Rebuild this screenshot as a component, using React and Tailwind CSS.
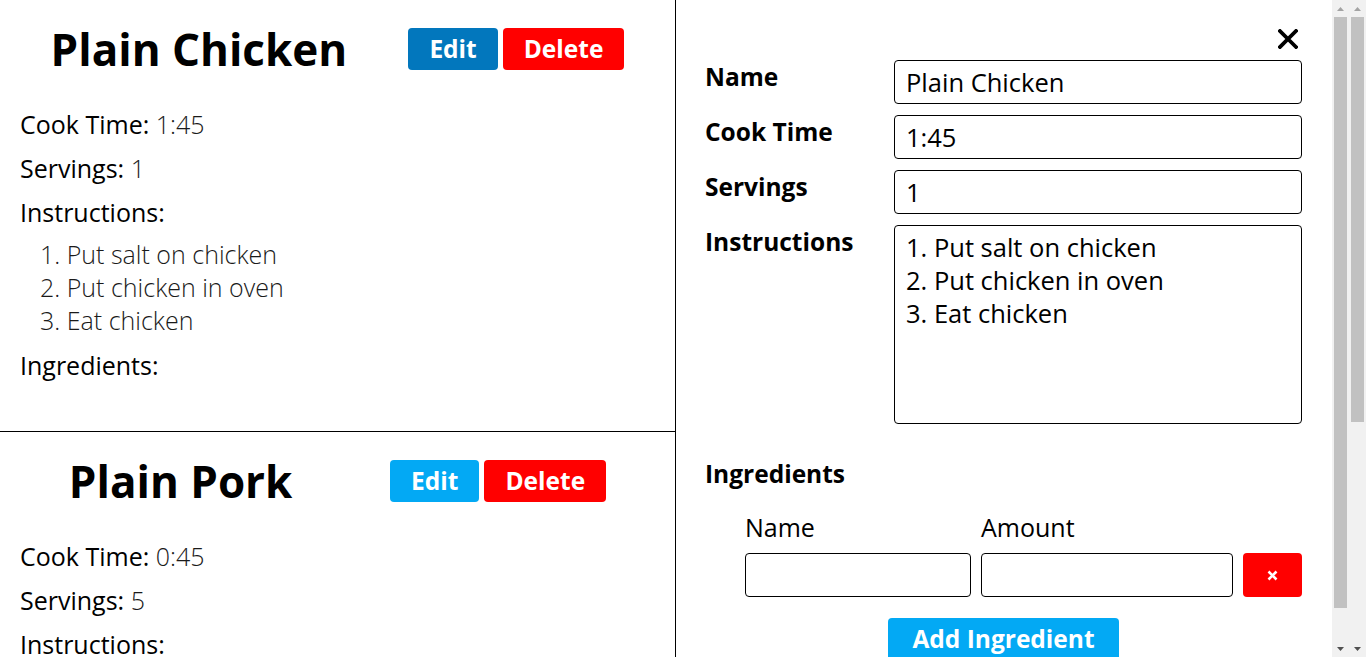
import React from 'react';

const recipes = [
  {
    id: 1,
    name: 'Plain Chicken',
    cookTime: '1:45',
    servings: 1,
    instructions: ['Put salt on chicken', 'Put chicken in oven', 'Eat chicken'],
    selected: true,
  },
  {
    id: 2,
    name: 'Plain Pork',
    cookTime: '0:45',
    servings: 5,
    instructions: ['Put paprika on pork', 'Put pork in oven', 'Eat pork'],
    selected: false,
  },
];

const font = { fontFamily: '"Open Sans", "Noto Sans", sans-serif' };

const Recipe = ({ recipe }) => (
  <div className="border-b border-black px-5 pt-5 pb-[50px]">
    <div className="flex items-center justify-around">
      <h1 className="text-[44px] font-bold leading-[58px] text-black">{recipe.name}</h1>
      <div className="flex gap-[5px]">
        <button
          className={`h-[42px] rounded px-[21px] text-[24.5px] font-bold text-white ${
            recipe.selected ? 'bg-[#0277bd]' : 'bg-[#03a9f4]'
          }`}
        >
          Edit
        </button>
        <button className="h-[42px] rounded bg-[#ff0000] px-[21px] text-[24.5px] font-bold text-white">
          Delete
        </button>
      </div>
    </div>
    <div className="mt-[30px] flex flex-col gap-3 text-[25px] leading-[32px]">
      <div>
        <span>Cook Time: </span>
        <span className="font-light text-[#1a1a1a]">{recipe.cookTime}</span>
      </div>
      <div>
        <span>Servings: </span>
        <span className="font-light text-[#1a1a1a]">{recipe.servings}</span>
      </div>
      <div>
        <span>Instructions:</span>
        <ol className="mt-[10px] list-inside list-decimal pl-5 font-light leading-[33px] text-[#1a1a1a]">
          {recipe.instructions.map((step) => (
            <li key={step}>{step}</li>
          ))}
        </ol>
      </div>
      <div>Ingredients:</div>
    </div>
  </div>
);

const Field = ({ label, children }) => (
  <div className="flex items-start">
    <label className="w-[189px] shrink-0 pt-px text-[24.5px] font-bold leading-[32px]">{label}</label>
    {children}
  </div>
);

const inputCls =
  'h-[44px] w-full rounded border border-black px-[11px] text-[25.5px] font-normal text-black outline-none';

// browser scrollbar as it shows in the screenshot
const Scrollbar = ({ thumbTop, thumbHeight }) => (
  <div className="flex h-full w-[17px] shrink-0 flex-col bg-[#f1f1f1]">
    <div className="flex h-[17px] shrink-0 items-center justify-center">
      <svg width="7" height="4" viewBox="0 0 7 4">
        <path d="M0 4 L3.5 0 L7 4 Z" fill="#a3a3a3" />
      </svg>
    </div>
    <div className="flex-1 px-[2px]">
      <div className="bg-[#c1c1c1]" style={{ marginTop: thumbTop, height: thumbHeight }} />
    </div>
    <div className="flex h-[17px] shrink-0 items-center justify-center">
      <svg width="7" height="4" viewBox="0 0 7 4">
        <path d="M0 0 L3.5 4 L7 0 Z" fill="#505050" />
      </svg>
    </div>
  </div>
);

export default function App() {
  return (
    <div className="flex h-screen overflow-hidden bg-white text-black" style={font}>
      <div className="w-[676px] shrink-0 border-r border-black">
        {recipes.map((r) => (
          <Recipe key={r.id} recipe={r} />
        ))}
      </div>
      <div className="flex min-w-0 flex-1">
        <div className="min-w-0 flex-1 overflow-hidden">
          <div className="pl-[29px] pr-[30px] pt-[29px] pb-8">
            <div className="flex justify-end pr-[4px]">
              <button className="h-[20px] w-[20px]">
                <svg viewBox="0 0 20 20" width="20" height="20">
                  <path d="M2 2 L18 18 M18 2 L2 18" stroke="black" strokeWidth="3.8" strokeLinecap="square" />
                </svg>
              </button>
            </div>
            <div className="mt-[11px] flex flex-col gap-[11px]">
              <Field label="Name">
                <input className={inputCls} defaultValue="Plain Chicken" />
              </Field>
              <Field label="Cook Time">
                <input className={inputCls} defaultValue="1:45" />
              </Field>
              <Field label="Servings">
                <input className={inputCls} defaultValue="1" />
              </Field>
              <Field label="Instructions">
                <textarea
                  className="h-[199px] w-full resize-none rounded border border-black px-[11px] pt-[5px] text-[25.5px] leading-[33px] outline-none"
                  defaultValue={'1. Put salt on chicken\n2. Put chicken in oven\n3. Eat chicken'}
                />
              </Field>
            </div>
            <div className="mt-[34px] text-[24.5px] font-bold leading-[32px]">Ingredients</div>
            <div className="mt-[21px] grid grid-cols-[226px_252px_1fr] gap-x-[10px] gap-y-[10px] pl-[40px]">
              <div className="text-[25px] leading-[32px]">Name</div>
              <div className="text-[25px] leading-[32px]">Amount</div>
              <div />
              <input className={inputCls} />
              <input className={inputCls} />
              <button className="flex h-[44px] items-center justify-center rounded bg-[#ff0000]">
                <svg viewBox="0 0 11 11" width="11" height="11">
                  <path d="M1.5 1.5 L9.5 9.5 M9.5 1.5 L1.5 9.5" stroke="white" strokeWidth="2.6" />
                </svg>
              </button>
            </div>
            <div className="mt-[21px] flex justify-center">
              <button className="h-[42px] rounded bg-[#03a9f4] px-[24px] text-[24.5px] font-bold text-white">
                Add Ingredient
              </button>
            </div>
          </div>
        </div>
        <Scrollbar thumbTop={0} thumbHeight={591} />
      </div>
      <Scrollbar thumbTop={0} thumbHeight={405} />
    </div>
  );
}
